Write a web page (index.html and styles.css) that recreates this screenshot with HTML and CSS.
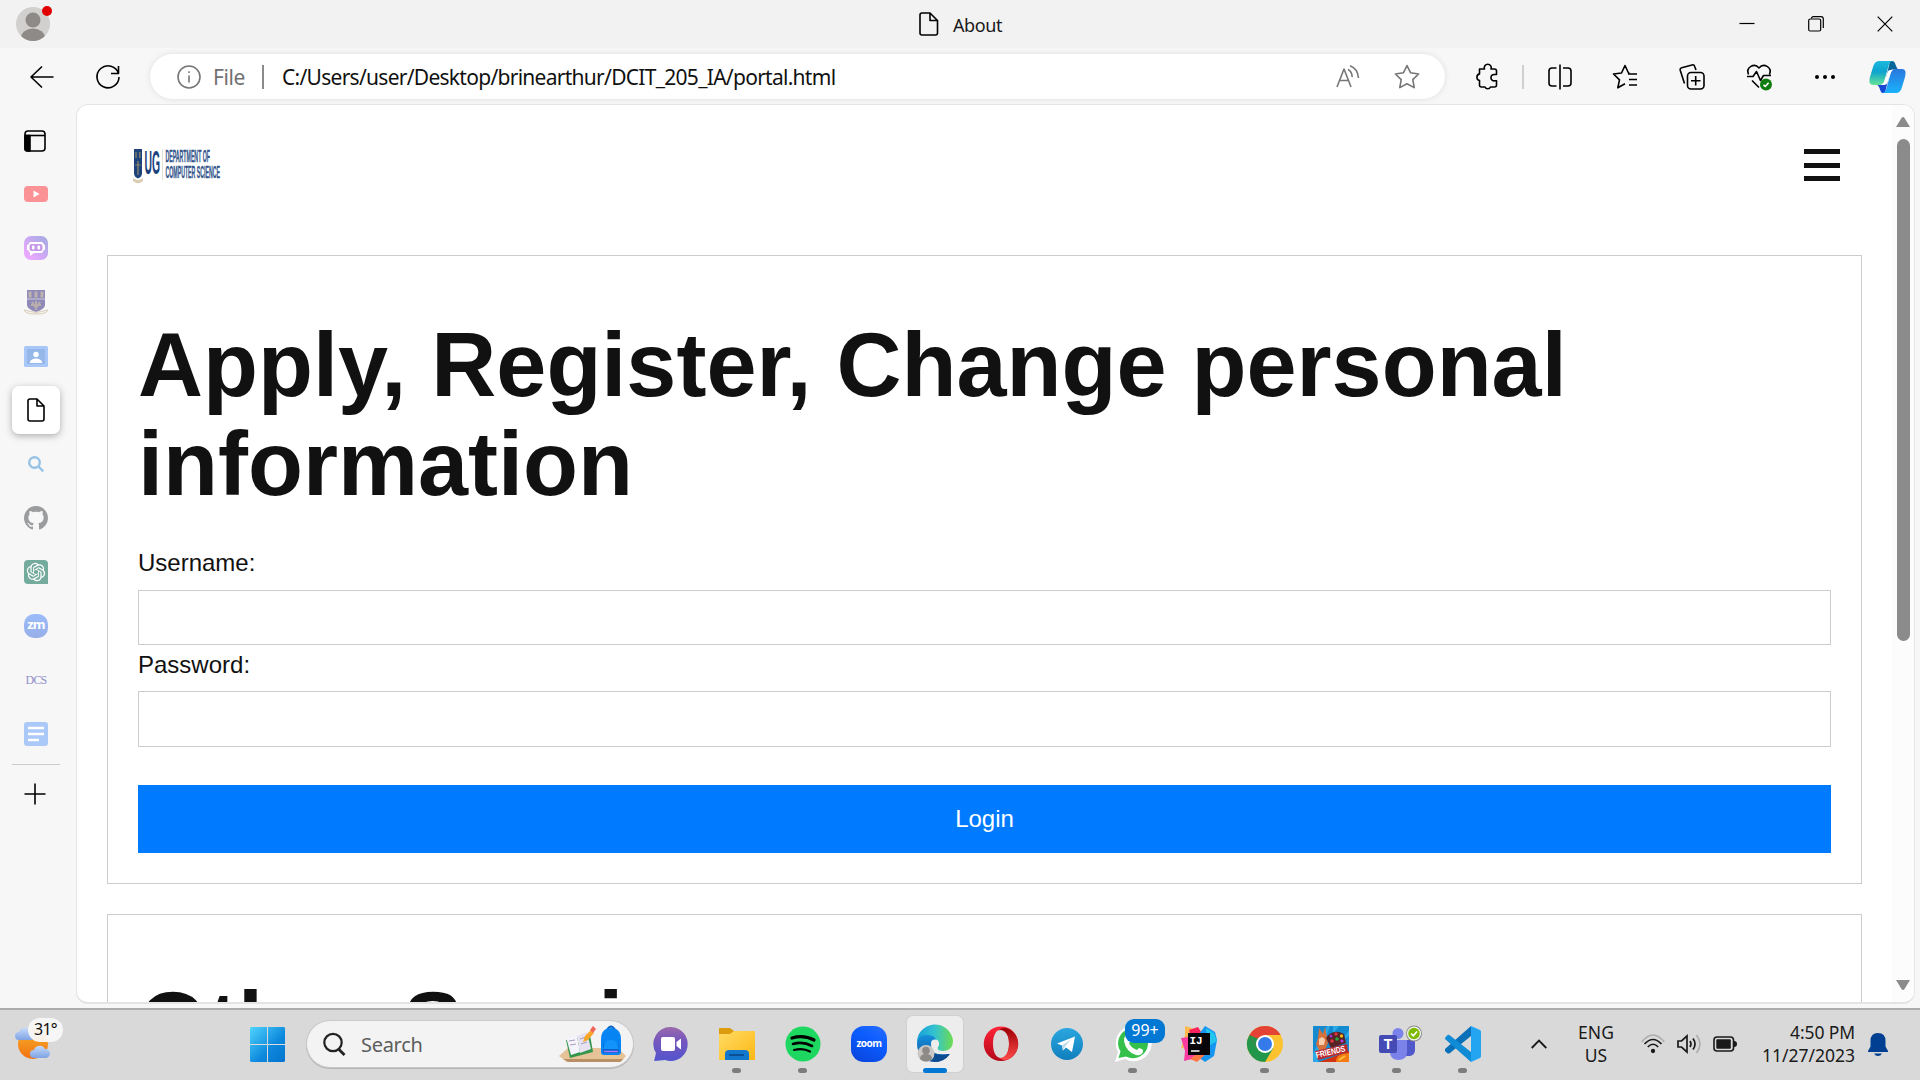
FILE: index.html
```html
<!DOCTYPE html>
<html lang="en">
<head>
<meta charset="utf-8">
<title>About</title>
<link rel="stylesheet" href="styles.css">
</head>
<body>
<header class="titlebar">
  <div class="profile">
    <svg width="34" height="34" viewBox="0 0 34 34"><defs><clipPath id="av"><circle cx="17" cy="17" r="17"/></clipPath></defs><g clip-path="url(#av)"><rect width="34" height="34" fill="#d2d0ce"/><circle cx="17" cy="13" r="7.5" fill="#8d8a87"/><ellipse cx="17" cy="31" rx="12" ry="9.500" fill="#8d8a87"/></g></svg>
    <span class="dot"></span>
  </div>
  <div class="tab-title">
    <svg width="20" height="24" viewBox="0 0 20 24" class="line"><path d="M3 1h8l7.500 7.500V21a2 2 0 0 1-2 2H3a2 2 0 0 1-2-2V3a2 2 0 0 1 2-2zM11 1v7.500h7.500"/></svg>
    <span class="about">About</span>
  </div>
  <div class="winctl">
    <svg width="16" height="16" viewBox="0 0 16 16" class="thin"><path d="M.5 7.500h15"/></svg>
    <svg width="16" height="16" viewBox="0 0 16 16" class="thin"><rect x=".7" y="3" width="12" height="12" rx="1.500"/><path d="M3.500 2.500Q3.500.7 5.500.7h7.500a2.300 2.300 0 0 1 2.300 2.300v9"/></svg>
    <svg width="16" height="16" viewBox="0 0 16 16" class="thin"><path d="M.7.7l14.600 14.600M15.300.7L.7 15.300"/></svg>
  </div>
</header>

<nav class="toolbar">
  <div class="nav-btns">
    <svg width="24" height="24" viewBox="0 0 24 24" class="line"><path d="M23.500 12H1M12 1.500L1 12l11 10.500"/></svg>
    <svg width="24" height="26" viewBox="0 0 24 26" class="line"><path d="M22.500 9.500A11 11 0 1 0 23 13M22.500 2v7.500H15"/></svg>
  </div>
  <div class="address">
    <svg width="24" height="24" viewBox="0 0 24 24" class="line grey"><circle cx="12" cy="12" r="11"/><path d="M12 10.500v7M12 6.300v1.800"/></svg>
    <span class="scheme">File</span>
    <span class="sep"></span>
    <span class="url">C:/Users/user/Desktop/brinearthur/DCIT_205_IA/portal.html</span>
    <svg width="24" height="24" viewBox="0 0 24 24" class="line grey aloud"><path d="M1 22L8 4l7 18M3.500 15.500h9M12 4.500c3 1.500 4 4 4.200 7.500M14 .8c5 1.800 8 6.500 8.500 12.200"/></svg>
    <svg width="26" height="25" viewBox="0 0 26 25" class="line grey"><path d="M13 1.500l3.600 7.300 8 1.200-5.800 5.600 1.400 8L13 19.800l-7.200 3.800 1.400-8L1.400 10l8-1.200z"/></svg>
  </div>
  <div class="tools">
    <svg width="24" height="26" viewBox="0 0 24 26" class="line"><path d="M5 5h4.500a3.500 3.500 0 1 1 6.500 0h3.500a2 2 0 0 1 2 2v3.500h-1.800a3.200 3.200 0 1 0 0 6.300h1.800V21a2 2 0 0 1-2 2h-4a3 3 0 0 1-5.500 0H6.500a2 2 0 0 1-2-2v-4.500a3.400 3.400 0 0 1 0-6.600V5z"/></svg>
    <span class="tsep"></span>
    <svg width="24" height="26" viewBox="0 0 24 26" class="line"><path d="M8.500 4H4a3 3 0 0 0-3 3v12a3 3 0 0 0 3 3h4.500M15 4h5a3 3 0 0 1 3 3v12a3 3 0 0 1-3 3h-5M12 .5v25"/></svg>
    <svg width="26" height="25" viewBox="0 0 26 25" class="line"><path d="M17.500 9h-1L13 1.500 9.500 9 1.500 10l6 5.800-1.700 8 7.200-4M16 10h9M17 15.500h8M17 21h8"/></svg>
    <svg width="26" height="26" viewBox="0 0 26 26" class="line"><path d="M5.500 19.500L1.200 6.200a2 2 0 0 1 1.500-2.500L13 .9a2.200 2.200 0 0 1 2.700 1.500L17 6"/><rect x="8.500" y="8.500" width="16.500" height="16.500" rx="3.500"/><path d="M16.700 12v9.500M12 16.700h9.500"/></svg>
    <svg width="26" height="28" viewBox="0 0 26 28" class="line"><path d="M2.500 11.500C-.5 4 8.500-.5 13 5c4.500-5.500 13.500-1 10.500 6.500M1 13.500h6l3.500-5 4 9 3-5h7.500M6 17.500l7 7"/><circle cx="20" cy="21.500" r="6" fill="#107c10" stroke="none"/><path d="M17.500 21.800l1.800 1.700 3.300-3.700" stroke="#fff"/></svg>
    <svg width="24" height="24" viewBox="0 0 24 24"><circle cx="4" cy="12" r="2"/><circle cx="12" cy="12" r="2"/><circle cx="20" cy="12" r="2"/></svg>
    <svg class="copilot" width="37" height="34" viewBox="0 0 37 34"><defs><linearGradient id="c1" x2="0" y2="1"><stop stop-color="#1bb9dc"/><stop offset=".45" stop-color="#0da3cf"/><stop offset="1" stop-color="#67e496"/></linearGradient><linearGradient id="c2" x2="0" y2="1"><stop stop-color="#2a77dc"/><stop offset="1" stop-color="#19b2fd"/></linearGradient></defs><path d="M21 1h2c4 0 3.500 7 6.500 8.500h-7L17 18z" fill="#07669a"/><path d="M16 33h-2c-3.500 0-2.500-7-6-8h7l5-9z" fill="#1747d5"/><path d="M10 1h14c-3 0-4 3-4.500 5l-4 14c-1 4-3 5-6 5H4c-4 0-4-4-3-8L4 7c1-4 3-6 6-6z" fill="url(#c1)"/><path d="M27 33H13c3 0 4-3 4.500-5l4-14c1-4 3-5 6-5H33c4 0 4 4 3 8l-3 10c-1 4-3 6-6 6z" fill="url(#c2)"/><path d="M21 10h3c-2 0-3 4-5 11-1 3-2 4-4.500 4H12c3 0 4-4 6-11 .8-3 1.500-4 3-4z" fill="#fff"/></svg>
  </div>
</nav>

<div class="workspace">
  <aside class="sidebar">
    <div class="cell"><svg width="22" height="22" viewBox="0 0 22 22" class="line"><rect x="1" y="1" width="20" height="20" rx="3"/><path d="M1 5.500h20"/><path d="M1 5.500h5V21H3q-2 0-2-2z" fill="#000"/></svg></div>
    <div class="cell"><svg width="24" height="16" viewBox="0 0 24 16"><rect width="24" height="16" rx="4" fill="#fb9295"/><path d="M9.500 4.500v7l6-3.500z" fill="#fff"/></svg></div>
    <div class="cell"><svg width="24" height="24" viewBox="0 0 24 24"><defs><linearGradient id="poe" x1="0" y1="1" x2="1" y2="0"><stop offset=".2" stop-color="#e8a8ff"/><stop offset="1" stop-color="#9fabe0"/></linearGradient></defs><rect width="24" height="24" rx="7" fill="url(#poe)"/><path d="M6 6h12l2 2v1h1v5h-1l-2 3H10l-4 3V17l-2-3H3V9h1l1-2z" fill="#fff"/><rect x="5.500" y="8" width="13" height="7" rx="2" fill="#c79bea"/><rect x="8" y="9.500" width="2.500" height="4" rx="1" fill="#fff"/><rect x="13.500" y="9.500" width="2.500" height="4" rx="1" fill="#fff"/></svg></div>
    <div class="cell"><svg width="24" height="24" viewBox="0 0 24 24"><path d="M3 0h18v15q0 4-9 7-9-3-9-7z" fill="#8f8ab8"/><path d="M3 9h18" stroke="#c5bfcf" stroke-width="1.200"/><path d="M6 1.500v6M12 1.500v6M18 1.500v6" stroke="#bdb3ae" stroke-width="3"/><path d="M8 12l4 6 4-6M7 15h10M12 11v9" stroke="#b9aeac" stroke-width="2" fill="none"/><path d="M0 20q5 1 7 1.500 5 2 10 0 2-.5 7-1.500-1 4-12 4T0 20z" fill="#f7f3ea" stroke="#cfc5b0" stroke-width=".8"/></svg></div>
    <div class="cell"><svg width="24" height="21" viewBox="0 0 24 21"><rect width="24" height="21" rx="1.500" fill="#a9c8f8"/><rect x="3" y="3" width="18" height="15" fill="#96b8e8"/><circle cx="12" cy="8.500" r="2.700" fill="#fff"/><path d="M6 17v-1q1-3.500 6-3.500t6 3.500v1z" fill="#fff"/></svg></div>
    <div class="cell"><div class="active"><svg width="18" height="24" viewBox="0 0 18 24" class="line"><path d="M3 1h7l7 7v13a2 2 0 0 1-2 2H3a2 2 0 0 1-2-2V3a2 2 0 0 1 2-2zM10 1v7h7"/></svg></div></div>
    <div class="cell"><svg width="16" height="16" viewBox="0 0 16 16" fill="none" stroke="#96c2e6" stroke-width="2.400"><circle cx="6.500" cy="6.500" r="5.300"/><path d="M10.500 10.500l4.800 4.800"/></svg></div>
    <div class="cell"><svg width="24" height="24" viewBox="0 0 16 16"><path fill="#9b9c9e" d="M8 0C3.580 0 0 3.580 0 8c0 3.540 2.290 6.530 5.470 7.590.4.070.55-.17.55-.38 0-.19-.01-.82-.01-1.490-2.010.37-2.530-.49-2.690-.94-.09-.23-.48-.94-.82-1.130-.28-.15-.68-.52-.01-.53.63-.01 1.080.58 1.230.82.72 1.210 1.870.87 2.330.66.07-.52.28-.87.51-1.070-1.780-.2-3.640-.89-3.640-3.950 0-.87.31-1.590.82-2.150-.08-.2-.36-1.020.08-2.120 0 0 .67-.21 2.200.82.64-.18 1.320-.27 2-.27s1.360.09 2 .27c1.530-1.040 2.200-.82 2.200-.82.44 1.100.16 1.920.08 2.120.51.56.82 1.270.82 2.150 0 3.070-1.870 3.750-3.650 3.950.29.25.54.73.54 1.480 0 1.070-.01 1.930-.01 2.200 0 .21.15.46.55.38A8.010 8.010 0 0 0 16 8c0-4.420-3.580-8-8-8z"/></svg></div>
    <div class="cell"><svg width="24" height="24" viewBox="0 0 24 24"><path d="M4 0h16q4 0 4 4v20H4q-4 0-4-4V4q0-4 4-4z" fill="#75ab9c"/><path transform="translate(2.800 2.800) scale(.767)" fill="#fff" d="M22.2819 9.8211a5.9847 5.9847 0 0 0-.5157-4.9108 6.0462 6.0462 0 0 0-6.5098-2.9A6.0651 6.0651 0 0 0 4.9807 4.1818a5.9847 5.9847 0 0 0-3.9977 2.9 6.0462 6.0462 0 0 0 .7427 7.0966 5.98 5.98 0 0 0 .511 4.9107 6.051 6.051 0 0 0 6.5146 2.9001A5.9847 5.9847 0 0 0 13.2599 24a6.0557 6.0557 0 0 0 5.7718-4.2058 5.9894 5.9894 0 0 0 3.9977-2.9001 6.0557 6.0557 0 0 0-.7475-7.0729zm-9.022 12.6081a4.4755 4.4755 0 0 1-2.8764-1.0408l.1419-.0804 4.7783-2.7582a.7948.7948 0 0 0 .3927-.6813v-6.7369l2.02 1.1686a.071.071 0 0 1 .038.052v5.5826a4.504 4.504 0 0 1-4.4945 4.4944zm-9.6607-4.1254a4.4708 4.4708 0 0 1-.5346-3.0137l.142.0852 4.783 2.7582a.7712.7712 0 0 0 .7806 0l5.8428-3.3685v2.3324a.0804.0804 0 0 1-.0332.0615L9.74 19.9502a4.4992 4.4992 0 0 1-6.1408-1.6464zM2.3408 7.8956a4.485 4.485 0 0 1 2.3655-1.9728V11.6a.7664.7664 0 0 0 .3879.6765l5.8144 3.3543-2.0201 1.1685a.0757.0757 0 0 1-.071 0l-4.8303-2.7865A4.504 4.504 0 0 1 2.3408 7.872zm16.5963 3.8558L13.1038 8.364 15.1192 7.2a.0757.0757 0 0 1 .071 0l4.8303 2.7913a4.4944 4.4944 0 0 1-.6765 8.1042v-5.6772a.79.79 0 0 0-.407-.667zm2.0107-3.0231l-.142-.0852-4.7735-2.7818a.7759.7759 0 0 0-.7854 0L9.409 9.2297V6.8974a.0662.0662 0 0 1 .0284-.0615l4.8303-2.7866a4.4992 4.4992 0 0 1 6.6802 4.66zM8.3065 12.863l-2.02-1.1638a.0804.0804 0 0 1-.038-.0567V6.0742a4.4992 4.4992 0 0 1 7.3757-3.4537l-.142.0805L8.704 5.459a.7948.7948 0 0 0-.3927.6813zm1.0976-2.3654l2.602-1.4998 2.6069 1.4998v2.9994l-2.5974 1.4997-2.6067-1.4997Z"/></svg></div>
    <div class="cell"><div class="zm">zm</div></div>
    <div class="cell"><span class="dcs">DCS</span></div>
    <div class="cell"><svg width="24" height="24" viewBox="0 0 24 24"><rect width="24" height="24" rx="3" fill="#aac8f8"/><path d="M4 6h16M4 12h16M4 18h11" stroke="#fff" stroke-width="2.500"/></svg></div>
    <div class="side-rule"></div>
    <div class="cell add"><svg width="22" height="22" viewBox="0 0 22 22" class="line"><path d="M11 .5v21M.5 11h21"/></svg></div>
  </aside>

  <div class="viewport">
    <main class="page">
      <div class="page-head">
        <svg width="88" height="38" viewBox="0 0 88 38">
          <path d="M1 2h8v24q0 4-4 5.500Q1 30 1 26z" fill="#1d427c"/><path d="M3 5v6M6.800 5v6M5 14v14M2.200 18h5.500" stroke="#968a67" stroke-width="1.200"/><path d="M0 31q5 4 10 0v3q-5 4.500-10 0z" fill="#dccdb0"/>
          <text x="11.500" y="26.500" font-family="Liberation Sans" font-weight="700" font-size="33" textLength="15.500" lengthAdjust="spacingAndGlyphs" fill="#1d427c">UG</text>
          <path d="M29.500 2v31" stroke="#e5e0d5"/>
          <g font-family="Liberation Sans" font-weight="700" fill="#33548a" stroke="#33548a" stroke-width=".35">
            <text x="32.500" y="14.500" font-size="16.500" textLength="44.500" lengthAdjust="spacingAndGlyphs">DEPARTMENT OF</text>
            <text x="32.500" y="31.300" font-size="16.500" textLength="54.500" lengthAdjust="spacingAndGlyphs">COMPUTER SCIENCE</text>
          </g>
        </svg>
        <div class="burger"><i></i><i></i><i></i></div>
      </div>
      <section class="card">
        <h1>Apply, Register, Change personal information</h1>
        <label for="u">Username:</label>
        <input id="u" type="text">
        <label for="p">Password:</label>
        <input id="p" type="password">
        <button type="button">Login</button>
      </section>
      <section class="card">
        <h1>Other Services</h1>
      </section>
    </main>
    <div class="scrollbar">
      <svg width="14" height="10" viewBox="0 0 14 10"><path d="M5.500 1q1.500-2 3 0L14 10H0z" fill="#8b8b8b"/></svg>
      <div class="thumb"></div>
      <svg width="14" height="10" viewBox="0 0 14 10"><path d="M5.500 9q1.500 2 3 0L14 0H0z" fill="#8b8b8b"/></svg>
    </div>
  </div>
</div>

<footer class="taskbar">
  <div class="weather">
    <svg width="36" height="36" viewBox="0 0 36 36"><defs><linearGradient id="sun" x2="0" y2="1"><stop stop-color="#f6b22e"/><stop offset="1" stop-color="#f2700f"/></linearGradient><linearGradient id="cl" x2="0" y2="1"><stop stop-color="#c5dafb"/><stop offset="1" stop-color="#7fa3e4"/></linearGradient></defs><circle cx="18" cy="18" r="15" fill="url(#sun)"/><path id="cd" d="M4 14a4 4 0 0 1 0-8 6 6 0 0 1 11-1 4.500 4.500 0 0 1 1 9z" fill="url(#cl)"/><use href="#cd" x="15" y="18"/></svg>
    <span class="temp">31°</span>
  </div>
  <div class="start"><svg width="35" height="35" viewBox="0 0 35 35"><defs><linearGradient id="w" gradientUnits="userSpaceOnUse" x1="0" y1="0" x2="35" y2="35"><stop stop-color="#4fd4fc"/><stop offset=".6" stop-color="#0d88dd"/><stop offset="1" stop-color="#0574ce"/></linearGradient></defs><path fill="url(#w)" d="M1 0h16v17H0V1zM18 0h16l1 1v16H18zM0 18h17v17H1l-1-1zM18 18h17v16l-1 1H18z"/></svg></div>
  <div class="search">
    <svg width="23" height="23" viewBox="0 0 23 23" fill="none" stroke="#222" stroke-width="2.200"><circle cx="10" cy="9.500" r="8.700"/><path d="M15.500 16l6 6" stroke-width="2.800"/></svg>
    <span class="search-text">Search</span>
    <svg width="68" height="38" viewBox="0 0 68 38"><path d="M0 31l9-8h50l8 8-5 6H8z" fill="#e5c298"/><path d="M4 34h60l-3 3H9z" fill="#b99066"/><path d="M7 15l24-5 3 17-23 6z" fill="#32964a"/><path d="M7 12l11-1 3 16-9 3z" fill="#f5f3fb"/><path d="M18 11l10-4 4 17-11 4z" fill="#e6e2f2"/><path d="M10 16l6-1M11 20l6-1M21 14l6-2M22 19l6-2" stroke="#a99dbb"/><path d="M24 17l2-6 6-6 3 3-6 7z" fill="#f8a52a"/><path d="M31 5l3-4 3 3-3 4z" fill="#f0645a"/><path d="M48 5q4-7 8 0" fill="none" stroke="#0c65c0" stroke-width="2"/><path d="M42 15q0-12 10-12t10 12v12q0 3-3 3H45q-3 0-3-3z" fill="#0684f4"/><path d="M44 22q0-6 8-6t8 6v6H44z" fill="#0661cf"/><path d="M45 21q0-6 7-6t7 6l1 3H44z" fill="#1193fa"/><path d="M45 26.500h14" stroke="#a87aff" stroke-width="1.500"/></svg>
  </div>
  <div class="apps">
    <div class="app"><svg width="36" height="36" viewBox="0 0 36 36"><defs><linearGradient id="ch" x2="0" y2="1"><stop stop-color="#9a69ab"/><stop offset=".4" stop-color="#7557bd"/><stop offset="1" stop-color="#5355ce"/></linearGradient></defs><path d="M18 1a17 17 0 1 1-6 33l-10 1q-1 0-.7-1L3 27A17 17 0 0 1 18 1z" fill="url(#ch)"/><rect x="8" y="11" width="14" height="14" rx="2" fill="#fff"/><path d="M23.500 16l4.500-3.500v11L23.500 20z" fill="#fff"/></svg></div>
    <div class="app run"><svg width="36" height="36" viewBox="0 0 36 36"><defs><linearGradient id="fo" x2="1" y2="1"><stop stop-color="#ffdc66"/><stop offset="1" stop-color="#fcb713"/></linearGradient></defs><path d="M0 3q0-1 1-1h10l4 3v6H0z" fill="#dc9c0d"/><path d="M0 8h11l4-3h20q1 0 1 1v28H0z" fill="url(#fo)"/><path d="M6 34v-6q0-4 4-4h16q4 0 4 4v6z" fill="#1278cd"/><path d="M10 29h15" stroke="#0b4f94" stroke-width="2"/></svg></div>
    <div class="app run"><svg width="36" height="36" viewBox="0 0 36 36"><circle cx="18" cy="18" r="17.500" fill="#1ed760"/><g fill="none" stroke="#000" stroke-linecap="round"><path d="M7 12q12-3.500 22 2" stroke-width="3.200"/><path d="M8 18q10-3 19 2" stroke-width="2.600"/><path d="M9 24q9-2.500 16 1.500" stroke-width="2.200"/></g></svg></div>
    <div class="app"><div class="zoom">zoom</div></div>
    <div class="app current"><div class="tile"><svg width="36" height="36" viewBox="0 0 36 36"><defs><linearGradient id="e1"><stop stop-color="#159fda"/><stop offset=".5" stop-color="#35c2cf"/><stop offset="1" stop-color="#6cdc4f"/></linearGradient><linearGradient id="e2" x2="0" y2="1"><stop stop-color="#168fd9"/><stop offset="1" stop-color="#0c55a5"/></linearGradient></defs><path d="M0 18A18 18 0 0 1 36 15q0 9-9 10-8 0-6-4 2-4-2-7Q9 7 0 18z" fill="url(#e1)"/><path d="M0 18q1-9 9-9 9 0 10 5-5 1-5 7 1 9 17 7 2 0 1 1-6 7-14 7A18 18 0 0 1 0 18z" fill="url(#e2)"/><path d="M14 20q0 12 19 8-6 8-15 8-10-3-4-16z" fill="#0c4c91"/><circle cx="18" cy="17.500" r="4" fill="#ededed"/><circle cx="9" cy="27.500" r="8.500" fill="#cac8c6"/><circle cx="9" cy="24.500" r="3.800" fill="#8c8987"/><path d="M3 33q0-5 6-5t6 5q-6 5-12 0z" fill="#8c8987"/></svg></div></div>
    <div class="app"><svg width="36" height="36" viewBox="0 0 36 36"><defs><linearGradient id="op" x2="0" y2="1"><stop stop-color="#ff2438"/><stop offset="1" stop-color="#b30719"/></linearGradient><linearGradient id="op2" x2="0" y2="1"><stop stop-color="#9c0006"/><stop offset="1" stop-color="#ff4b4b"/></linearGradient></defs><path fill-rule="evenodd" fill="url(#op)" d="M18 .5a17.300 17.300 0 1 1 0 34.600 17.300 17.300 0 0 1 0-34.600zm0 3c-5 0-8 6-8 14.300S13 32 18 32s8-6 8-14.200S23 3.500 18 3.500z"/><path fill="url(#op2)" d="M15 4.500Q23-1 30 6q5 5 5 12t-5 12q-7 7-15 1.500 4 1.500 7-1.500 4-4 4-12.200T22 6q-3-3-7-1.500z"/></svg></div>
    <div class="app"><svg width="36" height="36" viewBox="0 0 36 36"><defs><linearGradient id="tg" x2="0" y2="1"><stop stop-color="#2ba6df"/><stop offset="1" stop-color="#0f7fbd"/></linearGradient></defs><circle cx="18" cy="18" r="16" fill="url(#tg)"/><path d="M8 17.500L26 10.500 23 26l-6-4.500-3 3-1-5z" fill="#fff"/><path d="M13 19.500l9-6-6 7-2 4z" fill="#b9d9eb"/></svg></div>
    <div class="app run"><svg width="36" height="36" viewBox="0 0 36 36"><path d="M0 36l3-10A18 18 0 1 1 10 33z" fill="#fff"/><path d="M3.500 32l2-6.500a15 15 0 1 1 5.500 5z" fill="#35c04b"/><path d="M11 9q3-2 4 3l1 3-2 2q2 5 8 7l2-2q5 1 4 4-2 4-7 3Q11 26 9 15q0-4 2-6z" fill="#fff"/></svg><span class="count">99+</span></div>
    <div class="app"><svg width="36" height="36" viewBox="0 0 36 36"><path d="M4 0l13 4-5 12-12 7 4-14z" fill="#ffb84d"/><path d="M0 12l15-2 8 24-8-2-12 3 1-10z" fill="#f83ca0"/><path d="M8 4l9-3 5 8-11 5z" fill="#fb215c"/><path d="M18 8l6-8 10 6 2 8-3 16-9 6-9-7z" fill="#1595f0"/><path d="M25 2l8 5 3 8-10 6z" fill="#23c5ed"/><path d="M14 29l11-1-9 8-7-3z" fill="#fe7846"/><rect x="7" y="7" width="22" height="22" fill="#080509"/><text x="8.500" y="18" font-family="Liberation Mono" font-size="11" font-weight="700" fill="#fff">IJ</text><path d="M10 25h8.500" stroke="#fff" stroke-width="1.500"/></svg></div>
    <div class="app run"><svg width="36" height="36" viewBox="0 0 36 36"><circle cx="18" cy="18" r="18" fill="#fcc230"/><path d="M18 18L2.400 9A18 18 0 0 0 18 36l8-13.500z" fill="#22964b"/><path d="M2.400 9a18 18 0 0 1 31.200 0H18L10 22z" fill="#e34234"/><path d="M2.400 9l8 13.500L14 14z" fill="#22964b"/><circle cx="18" cy="18" r="9" fill="#fff"/><circle cx="18" cy="18" r="7" fill="#347be9"/></svg></div>
    <div class="app run"><svg width="36" height="36" viewBox="0 0 36 36"><rect width="36" height="36" fill="#148bd1"/><path d="M0 36v-8L14 0h3L5 36zM20 0h6l-6 8zM36 4v6l-8 6z" fill="#2ba8e6"/><path d="M6 36L36 25v11z" fill="#d2340f"/><path d="M5 12L6 2l4 6 2-7 2 10 1 6-3 7H6L3 18z" fill="#d5723c"/><path d="M6 13q4-4 6 1l-1 5H6z" fill="#f6d0ac"/><path d="M13 12Q20 2 31 8l2 9-15 5z" fill="#572325"/><g><circle cx="18" cy="10" r="1.500" fill="#9436ce"/><circle cx="23" cy="8" r="1.700" fill="#e0373e"/><circle cx="24" cy="13" r="1.800" fill="#22a941"/><circle cx="28.500" cy="10" r="1.700" fill="#efb819"/><circle cx="19" cy="15" r="1.800" fill="#e0373e"/><circle cx="29" cy="15" r="1.600" fill="#b83ce0"/></g><path d="M2 25l32-7 1 8L5 34z" fill="#b92a31"/><text x="3.500" y="32" transform="rotate(-13 3 32)" font-family="Liberation Sans" font-size="8.500" font-weight="700" textLength="30" lengthAdjust="spacingAndGlyphs" fill="#fff">FRIENDS</text><path d="M23 36q0-7 7-8l6-1v9z" fill="#f57c15"/><path d="M26 34l6-4" stroke="#ffc23c" stroke-width="2"/></svg></div>
    <div class="app run"><svg width="46" height="36" viewBox="0 0 46 36" class="teams"><circle cx="19" cy="7.500" r="5.500" fill="#7b83eb"/><path d="M24 14h12v10q0 5-5 6h-5z" fill="#5059c9"/><path d="M11 14h17v12q0 8-9 8-7 0-8-7z" fill="#7b83eb"/><rect y="9" width="18" height="18" rx="2" fill="#444bb5"/><text x="9" y="23" text-anchor="middle" font-family="Liberation Sans" font-size="14" font-weight="700" fill="#fff">T</text><circle cx="35" cy="7.500" r="8" fill="#8b8b8b"/><circle cx="35" cy="7.500" r="7" fill="#f3f6ed"/><circle cx="35" cy="7.500" r="5.700" fill="#7cb900"/><path d="M32 7.500l2.300 2.300L38 5.500" stroke="#fff" stroke-width="1.700" fill="none"/></svg></div>
    <div class="app run"><svg width="36" height="36" viewBox="0 0 36 36"><path d="M26 0l9 4q1 .5 1 2v24q0 1.500-1 2l-9 4z" fill="#24a5f2"/><path d="M0 23L26 0v10L5 27q-1.500 1-3 0L0 25z" fill="#0870b8"/><path d="M0 12l2-2.500q1.500-1.300 3 0L26 26v10L0 13z" fill="#108bd6"/></svg></div>
  </div>
  <div class="tray">
    <div class="chev"><svg width="16" height="10" viewBox="0 0 16 10" fill="none" stroke="#1a1a1a" stroke-width="1.800"><path d="M.7 9L8 1.500 15.300 9"/></svg></div>
    <div class="lang"><span>ENG</span><span>US</span></div>
    <div class="sys"><svg width="24" height="20" viewBox="0 0 24 20" fill="none" stroke="#1a1a1a" stroke-width="1.700"><path d="M.7 8q11.300-14 22.600 0" stroke="#adadad"/><path d="M3.500 10q8.500-9 17 0M6.800 13q5.200-5.500 10.400 0"/><circle cx="12" cy="17" r="1.300" fill="#1a1a1a"/></svg></div>
    <div class="sys"><svg width="24" height="20" viewBox="0 0 24 20" fill="none" stroke="#1a1a1a" stroke-width="1.700"><path d="M1 7h3.500L10 2v16l-5.500-5H1z"/><path d="M13 7q2 3 0 6M16 4.500q4 5.500 0 11"/><path d="M19.500 1q7 9 0 18" stroke="#adadad"/></svg></div>
    <div class="sys"><svg width="24" height="16" viewBox="0 0 24 16"><rect x="1" y="1" width="19.500" height="14" rx="3" fill="none" stroke="#1a1a1a" stroke-width="1.600"/><rect x="3.300" y="3.300" width="14.500" height="9.400" rx="1" fill="#1a1a1a"/><path d="M21 5q3 0 3 3t-3 3z" fill="#1a1a1a"/></svg></div>
    <div class="clock"><span class="time">4:50 PM</span><span class="date">11/27/2023</span></div>
    <div class="sys bell"><svg width="20" height="23" viewBox="0 0 20 23" fill="#003f92"><path d="M10 0q7.500 0 7.500 8v5.500L20 18v1H0v-1l2.500-4.500V8Q2.500 0 10 0zM6 20.500h8q-1.500 2.500-4 2.500t-4-2.500z"/></svg></div>
  </div>
</footer>
</body>
</html>
```
FILE: styles.css
```css
* { box-sizing: border-box; }
body {
  margin: 0;
  width: 1920px;
  height: 1080px;
  overflow: hidden;
  display: flex;
  flex-direction: column;
  background: #f7f7f7;
  color: #111;
  font-family: "Noto Sans", "Open Sans", sans-serif;
}
svg { display: block; flex: none; overflow: visible; }
.line { fill: none; stroke: #000; stroke-width: 1.6; stroke-linejoin: round; }
.thin { fill: none; stroke: #000; stroke-width: 1.2; }
.grey { stroke: #767676; }

/* Title bar */
.titlebar { height: 48px; flex: none; background: #f2f2f2; display: flex; align-items: center; }
.profile { position: relative; margin-left: 16px; width: 34px; }
.dot { position: absolute; right: -2px; top: -1px; width: 10px; height: 10px; border-radius: 50%; background: #e00000; }
.tab-title { display: flex; align-items: center; gap: 14px; margin-left: 869px; width: 200px; }
.about { font-size: 18px; line-height: 24px; padding-top: 2px; letter-spacing: -.4px; color: #1a1a1a; white-space: nowrap; }
.winctl { margin-left: auto; margin-right: 27px; display: flex; gap: 53px; }

/* Toolbar */
.toolbar { height: 56px; flex: none; display: flex; align-items: center; padding-top: 1px; }
.nav-btns { width: 150px; padding-left: 30px; display: flex; align-items: center; gap: 42px; }
.address { width: 1295px; height: 45px; border-radius: 23px; background: #fff; box-shadow: 0 0 6px rgba(0,0,0,.1); padding: 0 25px 0 27px; display: flex; align-items: center; }
.scheme { margin-left: 12px; width: 49px; font-size: 21px; letter-spacing: -.4px; color: #717171; }
.sep { width: 2px; height: 24px; background: #8a8a8a; }
.url { margin-left: 18px; flex: 1; font-size: 21px; letter-spacing: -.72px; color: #111; white-space: nowrap; }
.aloud { margin-right: 34px; }
.tools { display: flex; align-items: center; flex: 1; padding-left: 30px; gap: 40.8px; }
.tsep { width: 2px; height: 24px; background: #cfcfcf; margin: 0 -17.500px; }
.copilot { margin-left: -9px; }

/* Vertical tabs and page frame */
.workspace { flex: 1; min-height: 0; display: flex; padding: 0 5px 4px 0; }
.sidebar { width: 76px; padding-top: 11px; display: flex; flex-direction: column; align-items: flex-start; }
.cell { width: 72px; height: 54px; flex: none; display: flex; align-items: center; justify-content: center; }
.cell:first-child { padding-right: 3px; height: 52px; padding-bottom: -2px; }
.active { width: 48px; height: 48px; border-radius: 7px; background: #fff; box-shadow: 0 2px 7px rgba(0,0,0,.3); display: flex; align-items: center; justify-content: center; }
.zm { width: 24px; height: 24px; border-radius: 10px; background: linear-gradient(#9bbcfa, #97aee8); color: #fff; font: 700 13px/21px "Open Sans", sans-serif; text-align: center; letter-spacing: -.8px; }
.dcs { font: 12px/12px "Liberation Serif", serif; color: #8f8fca; letter-spacing: -.8px; }
.side-rule { width: 48px; height: 1px; background: #ccc; margin: 3px 0 2px 12px; flex: none; }
.add { padding-right: 2px; }

.viewport { flex: 1; min-width: 0; display: flex; background: #fff; border: 1px solid #e4e4e4; border-bottom-width: 2px; border-radius: 12px; overflow: hidden; }
.page { flex: 1; padding: 0 30px; font-family: "Liberation Sans", Arial, sans-serif; }
.page-head { height: 150px; padding: 42px 21px 0 26px; display: flex; justify-content: space-between; align-items: flex-start; }
.burger { width: 36px; display: flex; flex-direction: column; gap: 8.5px; padding-top: 2px; margin-right: 1px; }
.burger i { height: 5px; background: #111; }
.card { border: 1px solid #ccc; padding: 30px; margin-bottom: 30px; }
.card h1 { margin: 30px 0 29px; font-size: 90px; line-height: 99px; font-weight: 700; }
.card label { display: block; font-size: 24px; line-height: 40px; height: 46px; }
.card input { display: block; width: 100%; height: 55px; border: 1px solid #ccc; margin: 1px 0 0; padding: 0 12px; font-size: 20px; background: #fff; }
.card input[type="password"] { margin-top: 0; height: 56px; }
.card button { display: block; width: 100%; height: 68px; margin-top: 38px; border: 0; background: #007bff; color: #fff; font: 24px/68px "Liberation Sans", Arial, sans-serif; padding: 0; }
.scrollbar { width: 22px; background: #fcfcfc; display: flex; flex-direction: column; align-items: center; padding: 12px 0; }
.thumb { width: 13px; height: 502px; border-radius: 7px; background: #8b8b8b; margin: 12px 0 auto; }

/* Taskbar */
.taskbar { height: 72px; flex: none; background: #d9d9d9; border-top: 2px solid #adadad; padding-bottom: 2px; display: flex; align-items: center; color: #1a1a1a; }
.weather { position: relative; width: 234px; padding-left: 15px; }
.temp { position: absolute; left: 28px; top: -8px; width: 35px; height: 24px; border-radius: 12px; background: rgba(248,248,248,.92); font-size: 16px; line-height: 23px; letter-spacing: -.7px; text-align: center; color: #111; }
.start { width: 73px; padding-left: 16px; }
.search { width: 326px; height: 46px; border-radius: 23px; background: #f3f3f3; box-shadow: 0 0 0 1px #c9c9c9, 0 1px 0 1px #b5b5b5; display: flex; align-items: center; padding: 0 6px 0 16px; }
.search-text { margin-left: 15px; flex: 1; font-size: 20px; color: #5d5d5d; letter-spacing: -.3px; }
.apps { display: flex; margin-left: 5px; }
.app { position: relative; width: 66px; height: 56px; display: flex; align-items: center; justify-content: center; }
.run::after, .current::after { content: ""; position: absolute; bottom: -1px; left: 28px; width: 9px; height: 5px; border-radius: 3px; background: #7d7d7d; }
.current::after { left: 21px; width: 24px; background: #0078d4; }
.tile { width: 56px; height: 56px; border-radius: 6px; background: #ededed; box-shadow: 0 0 0 1px #d0d0d0; display: flex; align-items: center; justify-content: center; }
.zoom { width: 36px; height: 36px; border-radius: 13px; background: linear-gradient(30deg, #0b42d8, #0b5cff 60%, #286dff); color: #fff; font: 700 10px/34px "Open Sans", sans-serif; text-align: center; letter-spacing: -.5px; }
.teams { margin-left: 10px; }
.count { position: absolute; left: 25px; top: 3px; width: 40px; height: 24px; border-radius: 9px; background: #0078d4; color: #fff; font-size: 16px; line-height: 23px; text-align: center; }
.tray { display: flex; align-items: center; margin-left: 10px; font-size: 17.5px; line-height: 23px; }
.chev { width: 66px; display: flex; justify-content: center; }
.lang { width: 48px; margin-right: 15px; display: flex; flex-direction: column; align-items: center; }
.sys { width: 36px; display: flex; justify-content: center; }
.clock { width: 112px; display: flex; flex-direction: column; align-items: flex-end; }
.time { letter-spacing: -.1px; }
.bell { margin-left: 5px; }
```
